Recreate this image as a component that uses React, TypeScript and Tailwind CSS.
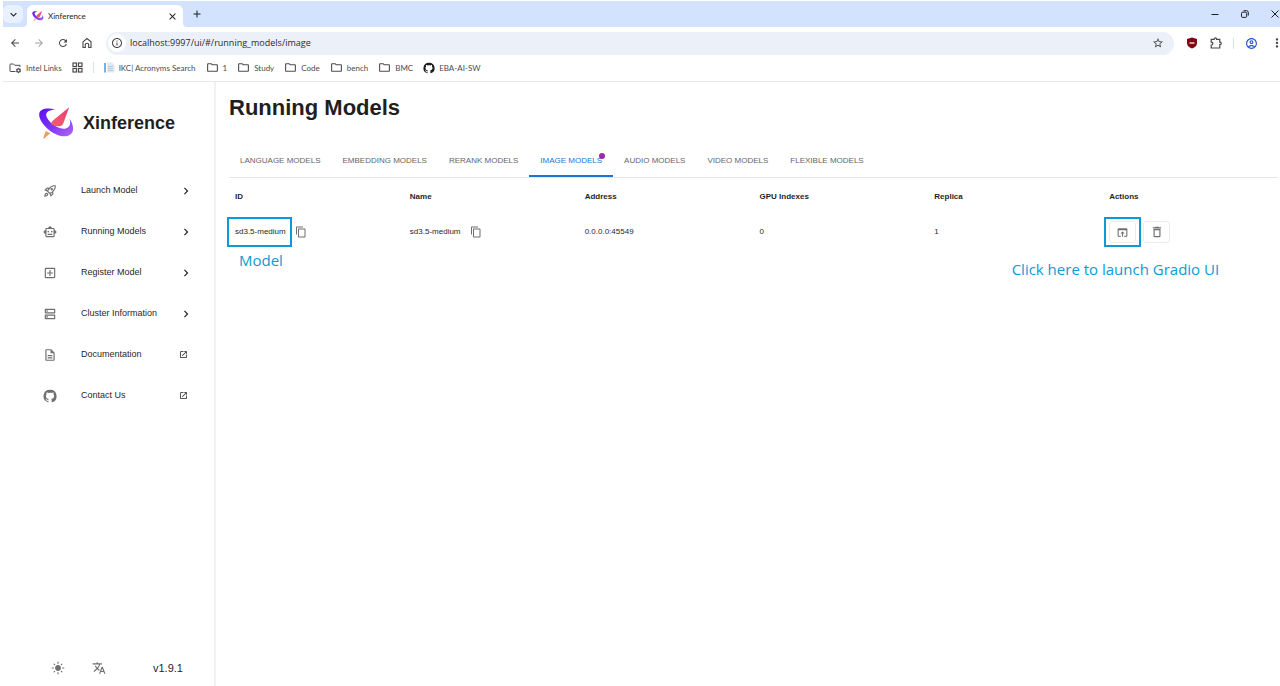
import type { ReactNode } from "react";
import {
  MdOutlineRocketLaunch,
  MdOutlineSmartToy,
  MdOutlineAddBox,
  MdOutlineDns,
  MdOutlineDescription,
  MdChevronRight,
  MdOpenInNew,
  MdOpenInBrowser,
  MdDeleteOutline,
  MdContentCopy,
  MdTranslate,
  MdLightMode,
  MdArrowBack,
  MdArrowForward,
  MdRefresh,
  MdInfoOutline,
  MdStarOutline,
  MdOutlineAccountCircle,
  MdMoreVert,
  MdClose,
  MdAdd,
  MdKeyboardArrowDown,
  MdOutlineFolder,
} from "react-icons/md";

function Logo({ className }: { className: string }) {
  return (
    <svg className={className} viewBox="24 20 110 102" aria-hidden="true">
      <defs>
        <linearGradient id="ring" x1="0" y1="0" x2="1" y2="1">
          <stop offset="0" stopColor="#5a0cf8" />
          <stop offset="0.5" stopColor="#7b35f5" />
          <stop offset="1" stopColor="#b066f2" />
        </linearGradient>
        <linearGradient id="rocket" x1="1" y1="0" x2="0" y2="1">
          <stop offset="0" stopColor="#ee3a78" />
          <stop offset="1" stopColor="#f2626c" />
        </linearGradient>
      </defs>
      <path
        d="M76 31C52 24 26 28 27 47C28 72 68 110 102 111C132 111 136 84 118 58C124 76 116 88 100 88C78 88 50 64 48 48C47 37 60 31 76 31Z"
        fill="url(#ring)"
      />
      <path d="M117 24L100 70Q97 80 88 81Q72 82 62 73Q64 67 70 62Z" fill="url(#rocket)" />
      <path d="M47 95Q53 100 61 101L40 119Q38 117 47 95Z" fill="#f09a5e" />
    </svg>
  );
}

function GitHubMark({ className }: { className: string }) {
  return (
    <svg className={className} viewBox="0 0 24 24" fill="currentColor" aria-hidden="true">
      <path d="M12 1.27a11 11 0 00-3.48 21.46c.55.09.73-.28.73-.55v-1.84c-3.03.64-3.67-1.46-3.67-1.46-.55-1.29-1.28-1.65-1.28-1.65-.92-.65.1-.65.1-.65 1.1 0 1.73 1.1 1.73 1.1.92 1.65 2.57 1.2 3.21.92a2 2 0 01.64-1.47c-2.47-.27-5.04-1.19-5.04-5.5 0-1.1.46-2.1 1.2-2.84a3.76 3.76 0 010-2.93s.91-.28 3.11 1.1c1.8-.49 3.7-.49 5.5 0 2.1-1.38 3.02-1.1 3.02-1.1a3.76 3.76 0 01.1 2.93c.83.74 1.2 1.74 1.2 2.94 0 4.21-2.57 5.13-5.04 5.4.45.37.82.92.82 2.02v3.03c0 .27.1.64.73.55A11 11 0 0012 1.27" />
    </svg>
  );
}

function TabStrip() {
  return (
    <div className="flex h-[26px] items-stretch bg-[#d3e3fd] text-[#1f1f1f]">
      <button aria-label="Search tabs" className="mt-1 flex h-[18px] w-5 items-center justify-center rounded-md bg-[#e9f1fe]">
        <MdKeyboardArrowDown className="size-[13px]" />
      </button>
      <div className="flex w-1 items-end bg-white">
        <span className="h-full w-full rounded-br-md bg-[#d3e3fd]" />
      </div>
      <div className="mt-1 flex w-[156px] items-center gap-1 rounded-t-md bg-white px-[5px]">
        <Logo className="h-3 w-3" />
        <span className="flex-1 font-[Lato,sans-serif] text-[8px]">Xinference</span>
        <button aria-label="Close tab">
          <MdClose className="size-[11px]" />
        </button>
      </div>
      <div className="flex w-1 items-end bg-white">
        <span className="h-full w-full rounded-bl-md bg-[#d3e3fd]" />
      </div>
      <button aria-label="New tab" className="ml-1 flex items-center">
        <MdAdd className="size-3" />
      </button>
      <div className="ml-auto flex items-center gap-5 overflow-hidden">
        <button aria-label="Minimize">
          <svg className="size-[10px]" viewBox="0 0 10 10" stroke="currentColor" fill="none">
            <path d="M1.500 5.500H8.500" />
          </svg>
        </button>
        <button aria-label="Restore">
          <svg className="size-[10px]" viewBox="0 0 10 10" stroke="currentColor" fill="none">
            <rect x="1.500" y="3.200" width="5.200" height="5.200" rx="1.200" />
            <path d="M3.500 1.700H6.500Q8.300 1.700 8.300 3.500V6.500" />
          </svg>
        </button>
        <button aria-label="Close window">
          <svg className="size-[10px]" viewBox="0 0 10 10" stroke="currentColor" fill="none">
            <path d="M1.500 1.500L8.500 8.500M8.500 1.500L1.500 8.500" />
          </svg>
        </button>
      </div>
    </div>
  );
}

function Toolbar() {
  return (
    <div className="flex h-8 items-center text-[#474747]">
      <div className="flex w-[103px] items-center gap-3 pl-[6px]">
        <button aria-label="Back"><MdArrowBack className="size-3" /></button>
        <button aria-label="Forward" className="text-[#a5a5a5]"><MdArrowForward className="size-3" /></button>
        <button aria-label="Reload"><MdRefresh className="size-3" /></button>
        <button aria-label="Home">
          <svg className="size-3" viewBox="0 0 12 12" fill="none" stroke="currentColor" strokeWidth="1.100">
            <path d="M2 4.800L6 1.500L10 4.800V10.500H7.700V7.600Q7.700 6.300 6 6.300Q4.300 6.300 4.300 7.600V10.500H2Z" />
          </svg>
        </button>
      </div>
      <div className="flex h-[23px] flex-1 items-center rounded-full bg-[#ebf0f9] pr-[10px] pl-[2px]">
        <span className="flex size-[18px] items-center justify-center rounded-full bg-white">
          <MdInfoOutline className="size-3" />
        </span>
        <input
          aria-label="Address"
          readOnly
          value="localhost:9997/ui/#/running_models/image"
          className="ml-1 flex-1 bg-transparent text-[9px] text-[#2b2b2b] outline-none"
        />
        <button aria-label="Bookmark this page"><MdStarOutline className="size-3" /></button>
      </div>
      <div className="flex items-center gap-3 pl-3">
        <button aria-label="Content blocker">
          <svg className="size-3" viewBox="0 0 12 12">
            <path d="M6 .5L11 2V6Q11 9.500 6 11.500Q1 9.500 1 6V2Z" fill="#800610" />
            <path d="M3.500 6H8.500" stroke="#e8d4d6" strokeWidth="1.500" />
          </svg>
        </button>
        <button aria-label="Extensions">
          <svg className="size-3" viewBox="0 0 12 12" fill="none" stroke="currentColor" strokeWidth="1.200">
            <path d="M1.200 2.300H4.200Q4.200 .8 5.400 .8Q6.600 .8 6.600 2.300H9.800V5.200Q11.300 5.300 11.300 6.400Q11.300 7.500 9.800 7.600V11H1.200V8.200Q2.900 8 2.900 6.600Q2.900 5.200 1.200 5.100Z" />
          </svg>
        </button>
        <span className="-mx-px h-[11px] w-px bg-[#d3e3fd]" />
        <button aria-label="Profile" className="text-[#1a56c8]"><MdOutlineAccountCircle className="size-[13px]" /></button>
        <button aria-label="Menu" className="-mr-1"><MdMoreVert className="size-[14px]" /></button>
      </div>
    </div>
  );
}

function Bookmark({ icon, label }: { icon?: ReactNode; label: string }) {
  return (
    <a href="#bookmark" className="flex items-center gap-1">
      {icon ?? <MdOutlineFolder className="size-[13px]" />}
      {label}
    </a>
  );
}

function Bookmarks() {
  return (
    <nav aria-label="Bookmarks" className="flex h-[23px] items-center gap-[10px] border-b border-[#e7e8ea] pb-[5px] pl-[6px] font-[Lato,sans-serif] text-[8px] text-[#4c4c4c]">
      <Bookmark
        label="Intel Links"
        icon={
          <svg className="h-3 w-[13px]" viewBox="0 0 13 12" fill="none" stroke="currentColor">
            <path d="M6.500 9.500H1.500Q1 9.500 1 9V2.500Q1 2 1.500 2H4.500L5.800 3.300H11V5" />
            <circle cx="9.500" cy="8.500" r="1.600" strokeWidth="1.300" />
            <path d="M9.500 5.800V6.900M9.500 10.100V11.200M7.200 7.200L8.100 7.700M10.900 9.300L11.800 9.800M7.200 9.800L8.100 9.300M10.900 7.700L11.800 7.200" strokeWidth=".9" />
          </svg>
        }
      />
      <button aria-label="Apps">
        <svg className="size-[11px]" viewBox="0 0 11 11" fill="none" stroke="currentColor" strokeWidth="1.200">
          <rect x="1" y="1" width="3.500" height="3.500" />
          <rect x="6.500" y="1" width="3.500" height="3.500" />
          <rect x="1" y="6.500" width="3.500" height="3.500" />
          <rect x="6.500" y="6.500" width="3.500" height="3.500" />
        </svg>
      </button>
      <span className="h-[11px] w-px bg-[#d3e3fd]" />
      <Bookmark
        label="IKC| Acronyms Search"
        icon={
          <svg className="size-[11px]" viewBox="0 0 11 11">
            <path d="M3 .5H8L10.500 3V10.500H3Z" fill="#e3e8ee" />
            <path d="M4 4.500H9M4 6.500H9M4 8.500H9" stroke="#b6bfca" strokeWidth=".8" />
            <path d="M1 1V10.500" stroke="#3b8fd0" strokeWidth="1.400" />
          </svg>
        }
      />
      <Bookmark label="1" />
      <Bookmark label="Study" />
      <Bookmark label="Code" />
      <Bookmark label="bench" />
      <Bookmark label="BMC" />
      <Bookmark label="EBA-AI-SW" icon={<GitHubMark className="size-3 text-[#1b1f23]" />} />
    </nav>
  );
}

const menu = [
  { label: "Launch Model", icon: <MdOutlineRocketLaunch className="size-[14px]" />, external: false },
  { label: "Running Models", icon: <MdOutlineSmartToy className="size-[14px]" />, external: false },
  { label: "Register Model", icon: <MdOutlineAddBox className="size-[14px]" />, external: false },
  { label: "Cluster Information", icon: <MdOutlineDns className="size-[14px]" />, external: false },
  { label: "Documentation", icon: <MdOutlineDescription className="size-[14px]" />, external: true },
  { label: "Contact Us", icon: <GitHubMark className="size-[14px]" />, external: true },
];

function Sidebar() {
  return (
    <aside className="flex w-[213px] shrink-0 flex-col border-r-2 border-[#f1f1f1]">
      <div className="flex items-center gap-2 pt-6 pl-[35px]">
        <Logo className="h-[34px] w-[37px]" />
        <span className="text-[18px] font-bold">Xinference</span>
      </div>
      <nav aria-label="Main" className="mt-[30px]">
        {menu.map((m) => (
          <a key={m.label} href={"#" + m.label} className="flex h-[41px] items-center pr-[25px] pl-10">
            <span className="w-[38px] text-[#6f6f6f]">{m.icon}</span>
            <span className="flex-1 text-[9px]">{m.label}</span>
            {m.external ? <MdOpenInNew className="mr-px size-[9px]" /> : <MdChevronRight className="-mr-1 size-[14px] stroke-current" />}
          </a>
        ))}
      </nav>
      <div className="mt-auto flex items-center pb-[10px] pl-12">
        <button aria-label="Toggle theme" className="w-[41px] text-[#6f6f6f]"><MdLightMode className="size-[14px]" /></button>
        <button aria-label="Language" className="w-[61px] text-[#6f6f6f]"><MdTranslate className="size-[14px]" /></button>
        <span className="text-[11px]">v1.9.1</span>
      </div>
    </aside>
  );
}

const tabs = ["LANGUAGE MODELS", "EMBEDDING MODELS", "RERANK MODELS", "IMAGE MODELS", "AUDIO MODELS", "VIDEO MODELS", "FLEXIBLE MODELS"];

const headers = ["ID", "Name", "Address", "GPU Indexes", "Replica", "Actions"];

function CopyButton() {
  return (
    <button aria-label="Copy" className="ml-[9px] text-[#6f6f6f]">
      <MdContentCopy className="size-3" />
    </button>
  );
}

function RunningModels() {
  return (
    <main className="min-w-0 flex-1 pt-3 pr-[2px] pl-[13px]">
      <h1 className="text-[22px] leading-7 font-bold">Running Models</h1>
      <div role="tablist" className="mt-[23px] flex border-b border-[#e6e6e6] text-[8px] text-[#666666]">
        {tabs.map((t) =>
          t === "IMAGE MODELS" ? (
            <button key={t} role="tab" aria-selected="true" className="-mb-px h-8 border-b-2 border-[#1976d2] px-[11px] pt-[2px] text-[#1976d2]">
              <span className="relative">
                {t}
                <span className="absolute -top-[3px] -right-[3px] size-[6px] rounded-full bg-[#9c27b0]" />
              </span>
            </button>
          ) : (
            <button key={t} role="tab" aria-selected="false" className="h-8 px-[11px]">
              {t}
            </button>
          ),
        )}
      </div>
      <table className="w-full table-fixed text-left text-[8px]">
        <thead>
          <tr className="h-9">
            {headers.map((h) => (
              <th key={h} className="pt-px pl-[6px] font-bold">{h}</th>
            ))}
          </tr>
        </thead>
        <tbody>
          <tr className="h-9">
            <td className="pl-[6px]">
              <div className="flex items-center">
                <span className="relative">
                  sd3.5-medium
                  <span className="absolute -inset-x-2 -inset-y-[9px] -right-[6px] border-2 border-[#0c9bd6]" />
                  <span className="absolute top-6 left-1 font-['Open_Sans',sans-serif] text-[15px] leading-5 text-[#0c9bd6]">Model</span>
                </span>
                <CopyButton />
              </div>
            </td>
            <td className="pl-[6px]">
              <div className="flex items-center">
                sd3.5-medium
                <CopyButton />
              </div>
            </td>
            <td className="pl-[6px]">0.0.0.0:45549</td>
            <td className="pl-[6px]">0</td>
            <td className="pl-[6px]">1</td>
            <td className="pl-[6px]">
              <div className="flex items-center gap-[7px]">
                <span className="relative">
                  <button aria-label="Open web UI" className="flex h-[22px] w-[27px] items-center justify-center rounded-[3px] border border-[#ececec] text-[#6f6f6f]">
                    <MdOpenInBrowser className="size-[13px]" />
                  </button>
                  <span className="pointer-events-none absolute -inset-x-[5px] -inset-y-1 border-2 border-[#0c9bd6]" />
                  <span className="absolute top-[38px] left-1/2 -translate-x-[111px] font-['Open_Sans',sans-serif] text-[15px] leading-5 whitespace-nowrap text-[#0c9bd6]">
                    Click here to launch Gradio UI
                  </span>
                </span>
                <button aria-label="Terminate model" className="flex h-[22px] w-[27px] items-center justify-center rounded-[3px] border border-[#ececec] text-[#6f6f6f]">
                  <MdDeleteOutline className="size-[14px]" />
                </button>
              </div>
            </td>
          </tr>
        </tbody>
      </table>
    </main>
  );
}

export default function App() {
  return (
    <div className="flex min-h-screen flex-col overflow-x-hidden bg-white pt-px pl-[3px] font-['Liberation_Sans',Arial,sans-serif] text-[#1f1f1f]">
      <header className="font-['Open_Sans',sans-serif]">
        <TabStrip />
        <Toolbar />
        <Bookmarks />
      </header>
      <div className="flex flex-1">
        <Sidebar />
        <RunningModels />
      </div>
    </div>
  );
}
